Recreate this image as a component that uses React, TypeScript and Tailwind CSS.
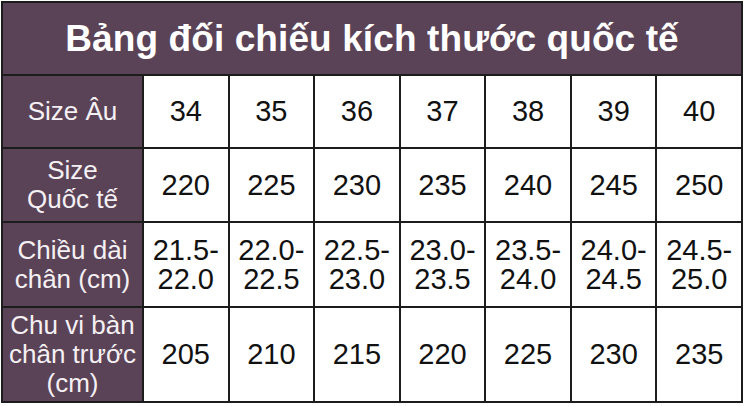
const cols = ['34', '35', '36', '37', '38', '39', '40'];

const rows: { label: string[]; values: string[][]; h: string }[] = [
  { label: ['Size Âu'], values: cols.map((v) => [v]), h: 'h-[71px]' },
  {
    label: ['Size', 'Quốc tế'],
    values: ['220', '225', '230', '235', '240', '245', '250'].map((v) => [v]),
    h: 'h-[72px]',
  },
  {
    label: ['Chiều dài', 'chân (cm)'],
    values: [
      ['21.5-', '22.0'],
      ['22.0-', '22.5'],
      ['22.5-', '23.0'],
      ['23.0-', '23.5'],
      ['23.5-', '24.0'],
      ['24.0-', '24.5'],
      ['24.5-', '25.0'],
    ],
    h: 'h-[83px]',
  },
  {
    label: ['Chu vi bàn', 'chân trước', '(cm)'],
    values: ['205', '210', '215', '220', '225', '230', '235'].map((v) => [v]),
    h: 'h-[93px]',
  },
];

export default function App() {
  return (
    <div className="w-[745px] h-[406px] bg-white pt-[1px] pl-[1px] font-['Liberation_Sans',Arial,sans-serif]">
      <div className="w-[742px] grid grid-cols-[139px_repeat(7,1fr)] gap-[2px] bg-[#1c1c1c] border-2 border-[#1c1c1c]">
        <div className="col-span-8 h-[71px] bg-[#5b4357] flex items-center justify-center">
          <h1 className="text-white font-bold text-[37px] leading-none tracking-[0.1px]">
            Bảng đối chiếu kích thước quốc tế
          </h1>
        </div>
        {rows.map((row) => (
          <div key={row.label.join()} className="contents">
            <div
              className={`${row.h} bg-[#5b4357] flex flex-col items-center justify-center text-[#f4f0f3] text-[26px] leading-[29px]`}
            >
              {row.label.map((l) => (
                <span key={l}>{l}</span>
              ))}
            </div>
            {row.values.map((v, i) => (
              <div
                key={i}
                className={`${row.h} bg-white flex flex-col items-center justify-center text-[#111] text-[29px] leading-[29px]`}
              >
                {v.map((t) => (
                  <span key={t}>{t}</span>
                ))}
              </div>
            ))}
          </div>
        ))}
      </div>
    </div>
  );
}
